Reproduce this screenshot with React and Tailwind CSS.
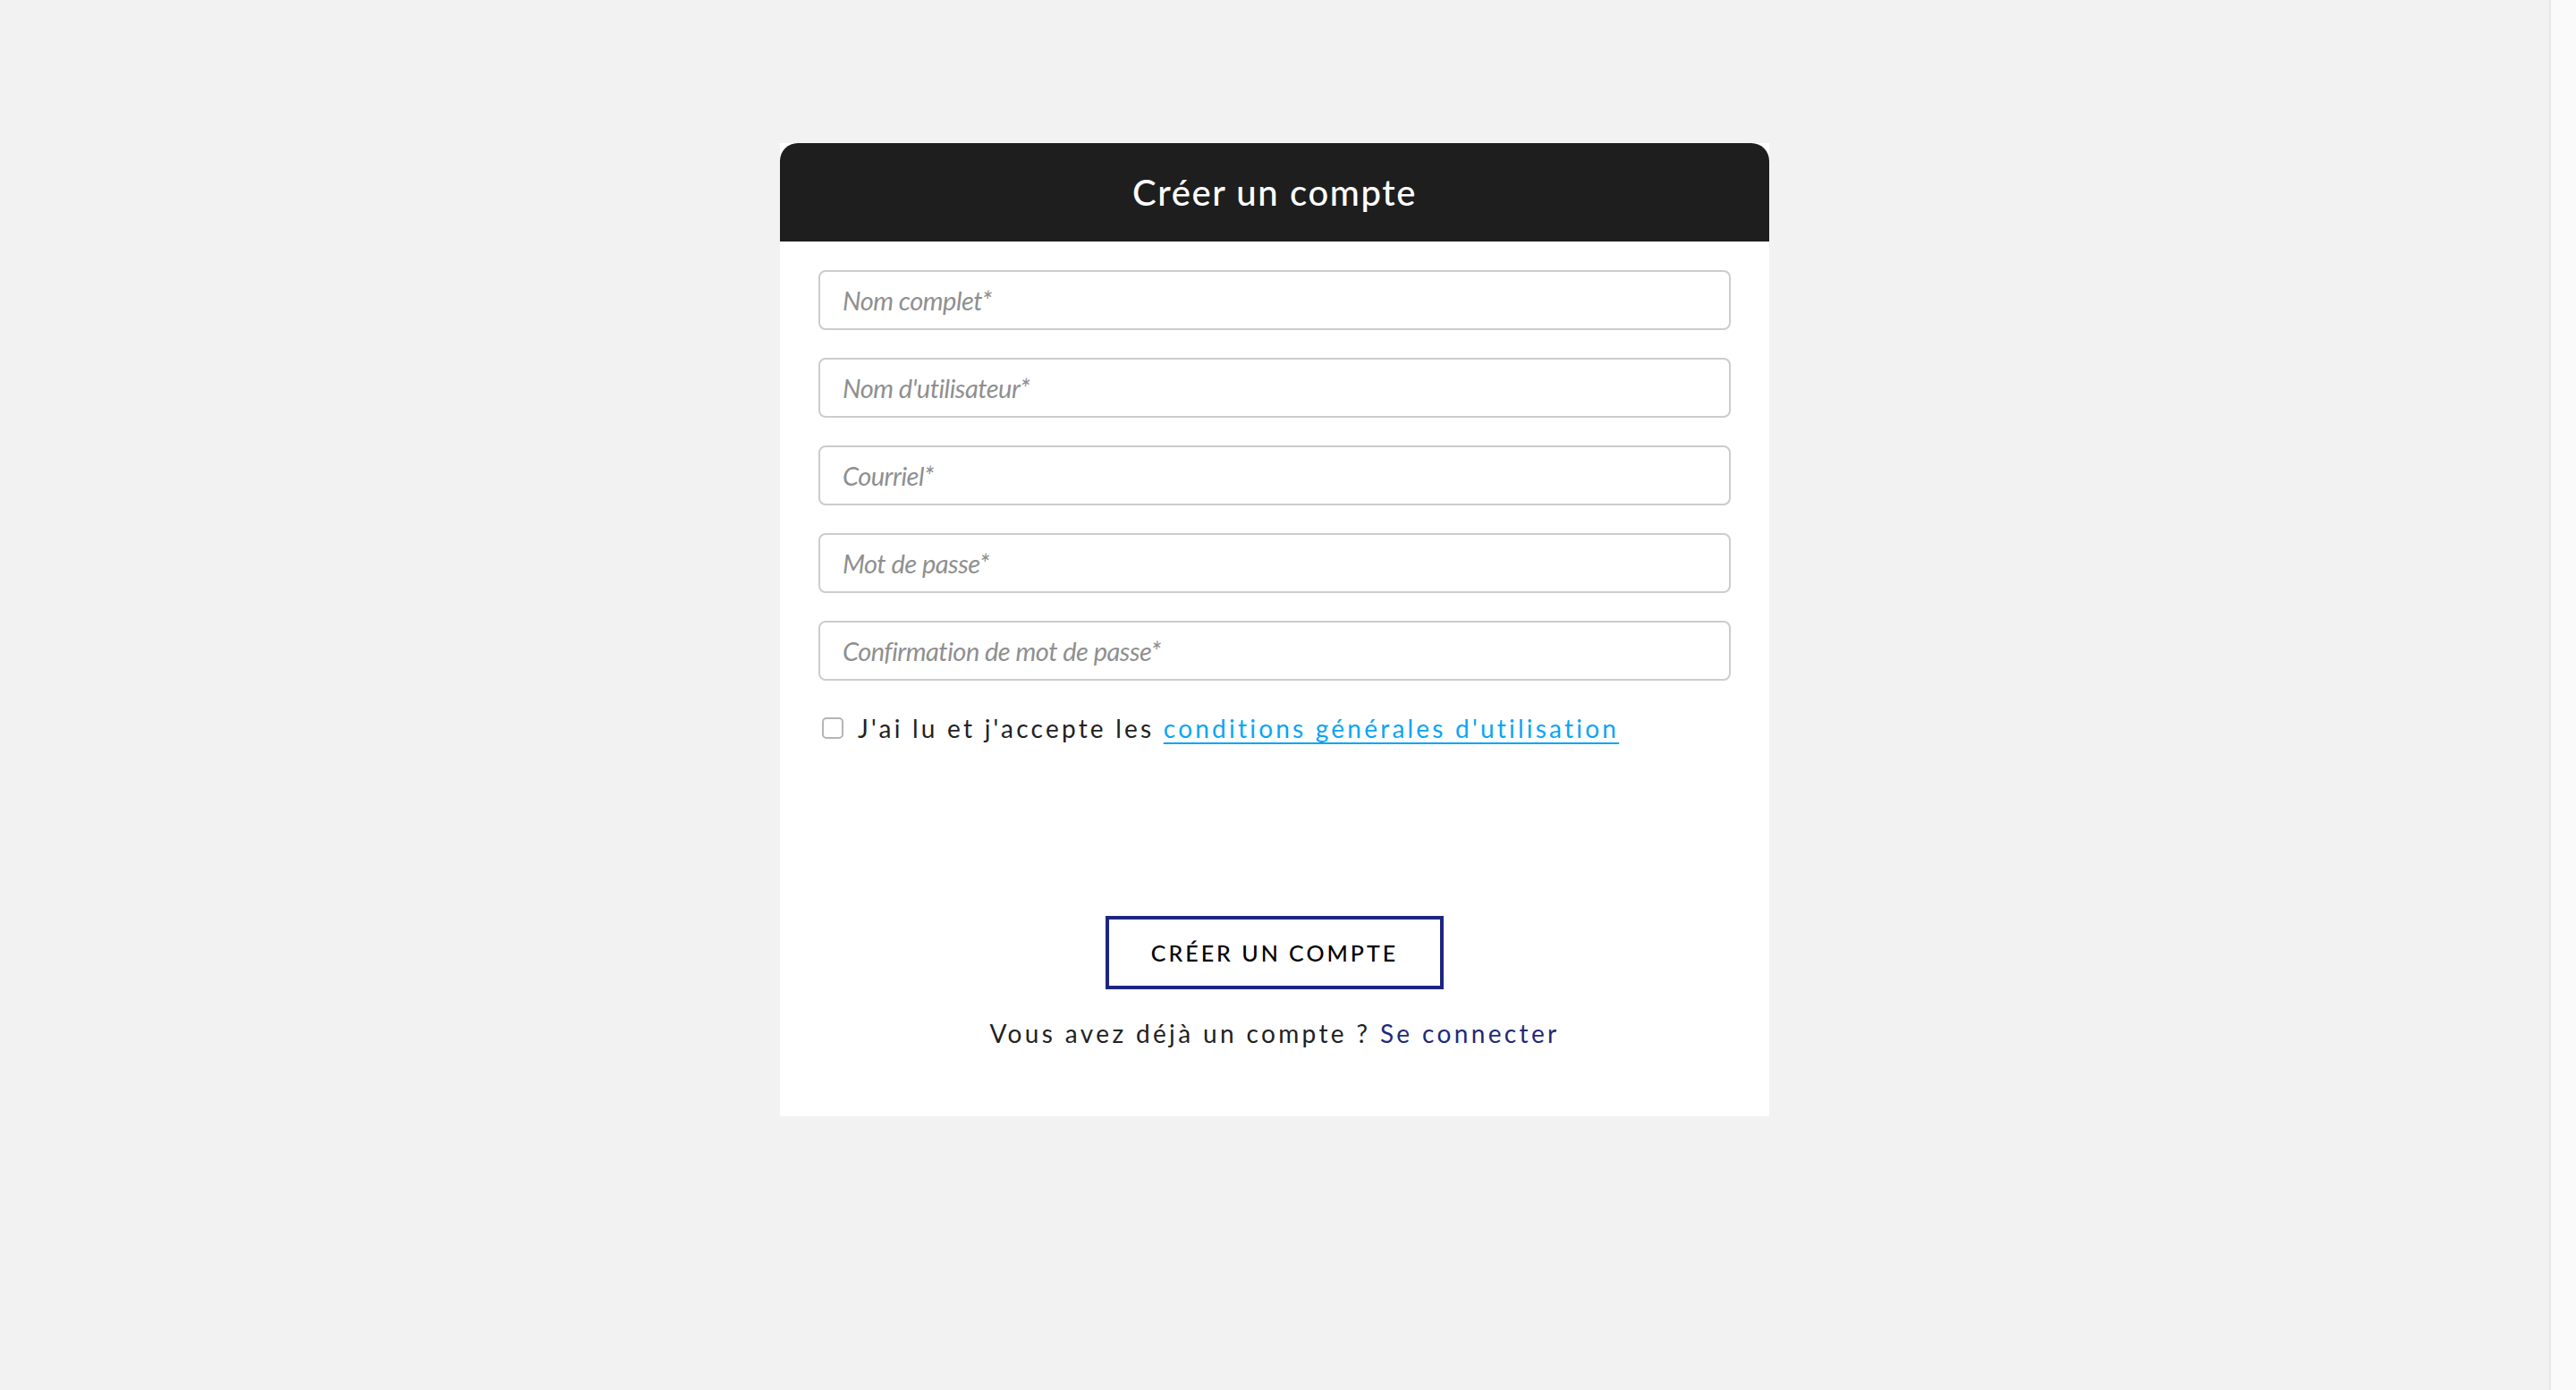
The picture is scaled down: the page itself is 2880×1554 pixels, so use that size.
import { useState } from 'react'

const champs = [
  'Nom complet*',
  "Nom d'utilisateur*",
  'Courriel*',
  'Mot de passe*',
  'Confirmation de mot de passe*',
]

export default function App() {
  const [ok, setOk] = useState(false)

  return (
    <div className="min-h-screen flex bg-[#f2f2f2]" style={{ fontFamily: 'Lato, "Open Sans", sans-serif' }}>
      <main className="flex-1 flex justify-center pt-[160px] pb-[306px]">
        <div className="w-[1106px] bg-white self-start">
          {/* entete */}
          <div className="h-[110px] bg-[#1e1e1e] rounded-t-[20px] flex items-center justify-center">
            <h1 className="text-white text-[40px] font-medium tracking-[0.04em] leading-none">Créer un compte</h1>
          </div>

          <form className="px-[43px] pt-[32px] pb-[79px]" onSubmit={e => e.preventDefault()}>
            <div className="flex flex-col gap-[31px]">
              {champs.map(c => (
                <input
                  key={c}
                  type={c.startsWith('Mot') || c.startsWith('Conf') ? 'password' : 'text'}
                  placeholder={c}
                  className="h-[67px] w-full border-2 border-[#cccccc] rounded-[8px] px-[25px] text-[29px] tracking-[-0.5px] outline-none placeholder:text-[#8f8f8f] placeholder:italic"
                />
              ))}
            </div>

            <label className="flex items-center gap-[16px] mt-[39px] pl-[4px] text-[28px] leading-none text-[#222222] tracking-[0.115em]">
              <span
                onClick={() => setOk(!ok)}
                className={`w-[24px] h-[24px] rounded-[5px] border-2 border-[#b5b5b5] shrink-0 ${ok ? 'bg-[#1c2680]' : 'bg-white'}`}
              />
              <span>
                J'ai lu et j'accepte les{' '}
                <a href="#" className="text-[#0aa5f5] underline underline-offset-[5px] decoration-2">conditions générales d'utilisation</a>
              </span>
            </label>

            <div className="flex justify-center mt-[196px]">
              <button className="w-[378px] h-[82px] border-4 border-[#1c2680] text-[25px] font-medium tracking-[0.12em] text-black leading-none">
                CRÉER UN COMPTE
              </button>
            </div>

            <p className="text-center mt-[35px] text-[28px] leading-none tracking-[0.12em] text-[#222222]">
              Vous avez déjà un compte ? <a href="#" className="text-[#1f2a7a]">Se connecter</a>
            </p>
          </form>
        </div>
      </main>
      <div className="w-[30px] border-l-2 border-[#e8e8e8] bg-[#fafafa]" />
    </div>
  )
}
